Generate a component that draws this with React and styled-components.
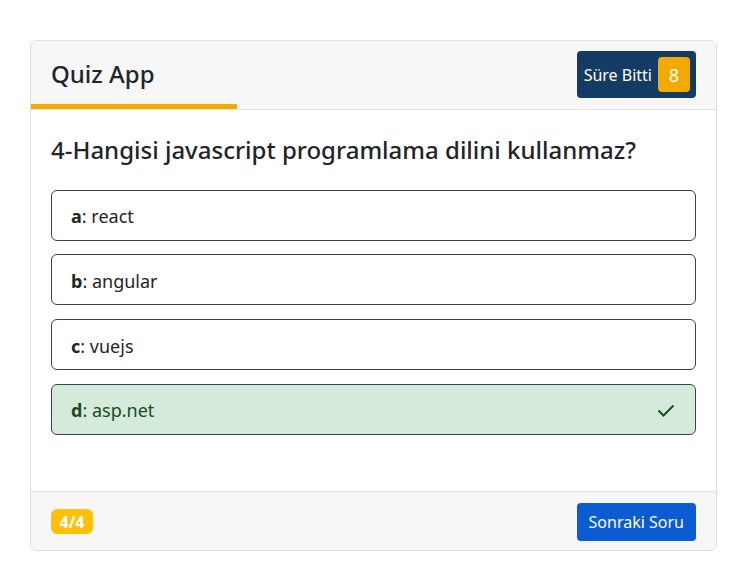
import React from 'react'
import styled, { createGlobalStyle } from 'styled-components'

const GlobalStyle = createGlobalStyle`
    body {
        margin: 0;
        background: #ffffff;
        font-family: "Noto Sans", "Open Sans", sans-serif;
        color: #212529;
    }
`

const Page = styled.div`
    padding: 40px 30px 33px;
`

const Card = styled.div`
    border: 1px solid #dfdfdf;
    border-radius: 6px;
    overflow: hidden;
    background: #fff;
`

const Header = styled.div`
    background: #f7f7f7;
    border-bottom: 1px solid #e3e3e3;
`

const HeaderRow = styled.div`
    display: flex;
    align-items: center;
    justify-content: space-between;
    padding: 10px 20px 6px;
`

const Title = styled.h1`
    margin: 0;
    font-size: 24px;
    font-weight: 500;
    line-height: 1.2;
`

const TimeBar = styled.div`
    height: 5px;
    background: #f2a900;
`

const Timer = styled.div`
    display: flex;
    align-items: center;
    gap: 6px;
    height: 47px;
    box-sizing: border-box;
    padding: 6px 6px 6px 7px;
    background: #143b63;
    border-radius: 4px;
    color: #fff;
    font-size: 16px;
`

const TimerCount = styled.span`
    display: flex;
    align-items: center;
    justify-content: center;
    width: 32px;
    height: 35px;
    background: #f2a900;
    border-radius: 4px;
    font-size: 18px;
`

const Body = styled.div`
    padding: 26px 20px 56px;
`

const Question = styled.h2`
    margin: 0 0 25px;
    font-size: 24px;
    font-weight: 500;
    line-height: 1.2;
`

const Options = styled.div`
    display: flex;
    flex-direction: column;
    gap: 13.67px;
`

const Option = styled.div`
    display: flex;
    align-items: center;
    justify-content: space-between;
    height: 51px;
    box-sizing: border-box;
    padding: 2px 19px 0;
    border: 1px solid #3b4152;
    border-radius: 6px;
    font-size: 18px;
    background: ${({ correct }) => (correct ? '#d4ebd9' : '#fff')};
    color: ${({ correct }) => (correct ? '#1b4a1f' : '#212529')};
`

const Footer = styled.div`
    display: flex;
    align-items: center;
    justify-content: space-between;
    padding: 11px 20px 9px;
    background: #f7f7f7;
    border-top: 1px solid #e3e3e3;
`

const Count = styled.span`
    display: inline-flex;
    align-items: center;
    justify-content: center;
    width: 42px;
    height: 25px;
    background: #ffc107;
    border-radius: 6px;
    color: #fff;
    font-size: 16px;
    font-weight: 700;
`

const NextButton = styled.button`
    height: 38px;
    padding: 0 12px;
    border: none;
    border-radius: 4px;
    background: #0b5bd3;
    color: #fff;
    font-family: inherit;
    font-size: 16px;
`

const Check = () => (
    <svg width="20" height="20" viewBox="0 0 20 20" fill="none">
        <path d="M2.5 10.5 L7.5 15.5 L17.5 5.5" stroke="#1f4d22" strokeWidth="2" />
    </svg>
)

const options = [
    { key: 'a', text: 'react' },
    { key: 'b', text: 'angular' },
    { key: 'c', text: 'vuejs' },
    { key: 'd', text: 'asp.net', correct: true },
]

export default function App() {
    return (
        <Page>
            <GlobalStyle />
            <Card>
                <Header>
                    <HeaderRow>
                        <Title>Quiz App</Title>
                        <Timer>
                            Süre Bitti
                            <TimerCount>8</TimerCount>
                        </Timer>
                    </HeaderRow>
                    <TimeBar style={{ width: '30%' }} />
                </Header>
                <Body>
                    <Question>4-Hangisi javascript programlama dilini kullanmaz?</Question>
                    <Options>
                        {options.map((o) => (
                            <Option key={o.key} correct={o.correct}>
                                <span><b>{o.key}</b>: {o.text}</span>
                                {o.correct ? <Check /> : null}
                            </Option>
                        ))}
                    </Options>
                </Body>
                <Footer>
                    <Count>4/4</Count>
                    <NextButton>Sonraki Soru</NextButton>
                </Footer>
            </Card>
        </Page>
    )
}
